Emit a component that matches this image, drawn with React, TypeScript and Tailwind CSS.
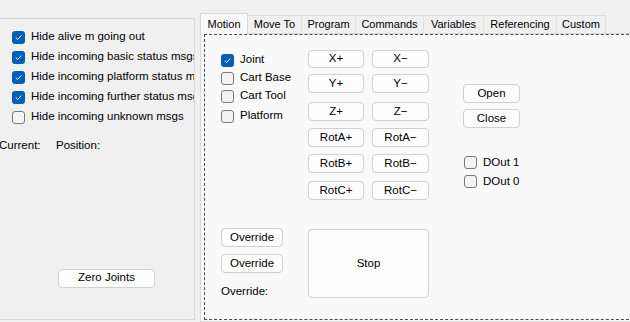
import React from "react";

const font = { fontFamily: '"Liberation Sans", Arial, sans-serif' };

function Check({ checked = false }: { checked?: boolean }) {
  return checked ? (
    <span className="flex h-[13px] w-[13px] shrink-0 items-center justify-center rounded-[3px] bg-[#005fb8]">
      <svg width="9" height="9" viewBox="0 0 9 9">
        <path d="M1.8 4.6 L3.7 6.4 L7.3 2.6" fill="none" stroke="#ffffff" strokeWidth="1" />
      </svg>
    </span>
  ) : (
    <span className="block h-[13px] w-[13px] shrink-0 rounded-[3px] border border-[#7a7a7a] bg-[#f3f3f3]" />
  );
}

function CheckRow({ label, checked, h = 20 }: { label: string; checked?: boolean; h?: number }) {
  return (
    <div className="flex items-center whitespace-nowrap" style={{ height: h }}>
      <Check checked={checked} />
      <span className="ml-[6px] text-[11.5px] leading-none text-black">{label}</span>
    </div>
  );
}

function Btn({ label, className = "" }: { label: string; className?: string }) {
  return (
    <div
      className={
        "flex items-center justify-center rounded-[4px] border border-[#d0d0d0] bg-[#fdfdfd] text-[11.5px] leading-none text-black " +
        className
      }
    >
      {label}
    </div>
  );
}

function Tab({ label, active = false, w }: { label: string; active?: boolean; w: number }) {
  return active ? (
    <div
      className="relative z-10 -mb-px flex h-[21px] items-center justify-center border border-b-0 border-[#d9d9d9] bg-[#f9f9f9] text-[11px] leading-none text-black"
      style={{ width: w }}
    >
      {label}
    </div>
  ) : (
    <div
      className="mt-[2px] flex h-[18px] items-center justify-center border border-l-0 border-b-0 border-[#e0e0e0] bg-[#f0f0f0] text-[11px] leading-none text-black"
      style={{ width: w }}
    >
      {label}
    </div>
  );
}

export default function App() {
  return (
    <div className="flex h-[322px] w-[630px] overflow-hidden bg-[#f0f0f0]" style={font}>
      {/* Left panel */}
      <div className="ml-[-2px] mt-[18px] flex h-[302px] w-[197px] shrink-0 flex-col border-r border-t border-b border-[#dadada] pl-[14px]">
        <div className="mt-[8px] flex flex-col overflow-hidden">
          <CheckRow label="Hide alive m going out" checked />
          <CheckRow label="Hide incoming basic status msgs" checked />
          <CheckRow label="Hide incoming platform status msgs" checked />
          <CheckRow label="Hide incoming further status msgs" checked />
          <CheckRow label="Hide incoming unknown msgs" />
        </div>
        <div className="ml-[-14px] mt-[13px] flex text-[11.5px] leading-none text-black">
          <span className="ml-[1px] w-[57px]">Current:</span>
          <span>Position:</span>
        </div>
        <Btn label="Zero Joints" className="ml-[46px] mt-[117px] h-[19px] w-[97px]" />
      </div>

      {/* Tab control */}
      <div className="ml-[5px] flex flex-1 flex-col">
        <div className="mt-[13px] flex">
          <Tab label="Motion" active w={48} />
          <Tab label="Move To" w={54} />
          <Tab label="Program" w={54} />
          <Tab label="Commands" w={68} />
          <Tab label="Variables" w={60} />
          <Tab label="Referencing" w={73} />
          <Tab label="Custom" w={49} />
        </div>
        <div className="h-[291px] w-[440px] border border-[#d9d9d9] bg-[#f9f9f9] pl-[3px]">
          <div className="flex h-[286px] border border-dashed border-[#4a4a4a] pl-[16px]">
            {/* col 1 */}
            <div className="flex w-[87px] shrink-0 flex-col">
              <div className="mt-[16px] flex flex-col">
                <CheckRow label="Joint" checked h={18} />
                <CheckRow label="Cart Base" h={18} />
                <CheckRow label="Cart Tool" h={18} />
                <CheckRow label="Platform" h={22} />
              </div>
              <Btn label="Override" className="mt-[101px] h-[19px] w-[62px]" />
              <Btn label="Override" className="mt-[7px] h-[19px] w-[62px]" />
              <span className="mt-[13px] text-[11.5px] leading-none text-black">Override:</span>
            </div>
            {/* col 2 */}
            <div className="flex w-[155px] shrink-0 flex-col">
              <div className="mt-[15px] grid grid-cols-[56px_57px] gap-x-[8px]">
                <Btn label="X+" className="h-[18px]" />
                <Btn label="X−" className="h-[18px]" />
              </div>
              <div className="mt-[6px] grid grid-cols-[56px_57px] gap-x-[8px]">
                <Btn label="Y+" className="h-[19px]" />
                <Btn label="Y−" className="h-[19px]" />
              </div>
              <div className="mt-[9px] grid grid-cols-[56px_57px] gap-x-[8px]">
                <Btn label="Z+" className="h-[19px]" />
                <Btn label="Z−" className="h-[19px]" />
              </div>
              <div className="mt-[7px] grid grid-cols-[56px_57px] gap-x-[8px]">
                <Btn label="RotA+" className="h-[19px]" />
                <Btn label="RotA−" className="h-[19px]" />
              </div>
              <div className="mt-[7px] grid grid-cols-[56px_57px] gap-x-[8px]">
                <Btn label="RotB+" className="h-[19px]" />
                <Btn label="RotB−" className="h-[19px]" />
              </div>
              <div className="mt-[8px] grid grid-cols-[56px_57px] gap-x-[8px]">
                <Btn label="RotC+" className="h-[19px]" />
                <Btn label="RotC−" className="h-[19px]" />
              </div>
              <Btn label="Stop" className="mt-[29px] h-[69px] w-[121px]" />
            </div>
            {/* col 3 */}
            <div className="flex flex-col">
              <Btn label="Open" className="mt-[49px] h-[19px] w-[57px]" />
              <Btn label="Close" className="mt-[6px] h-[19px] w-[57px]" />
              <div className="ml-[1px] mt-[25px] flex flex-col">
                <CheckRow label="DOut 1" h={19} />
                <CheckRow label="DOut 0" h={19} />
              </div>
            </div>
          </div>
        </div>
      </div>
    </div>
  );
}
